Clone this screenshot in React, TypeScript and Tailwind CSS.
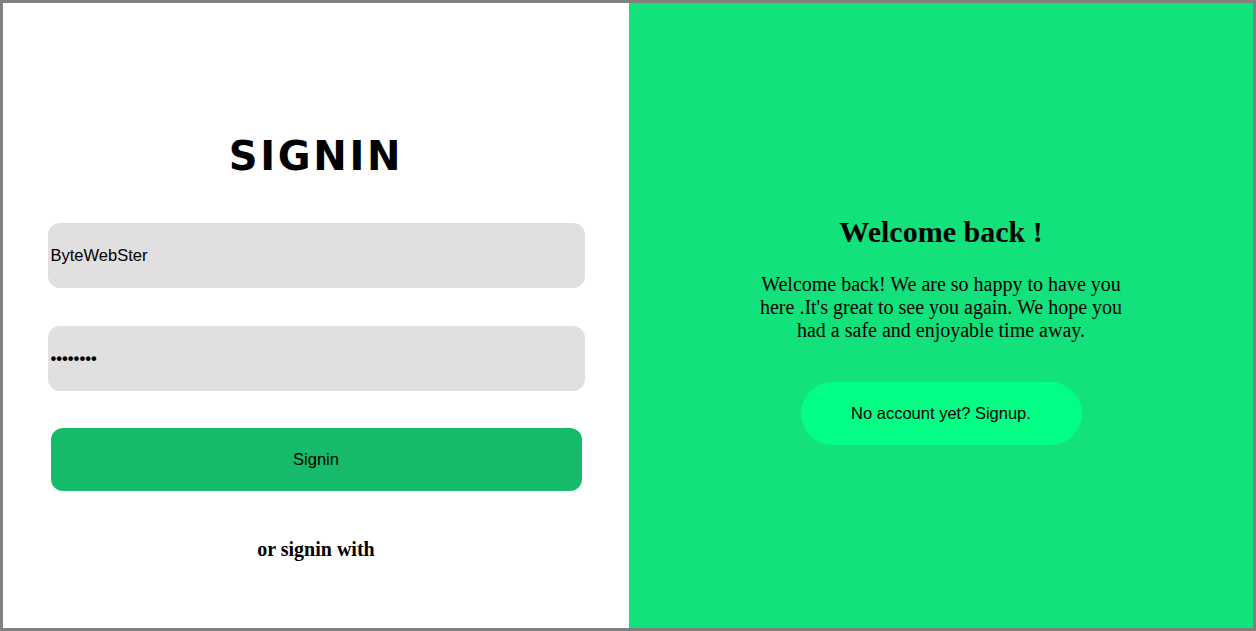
import React from "react";

function SigninForm() {
  return (
    <div className="w-[626px] h-full bg-white flex flex-col items-center pt-[129px]">
      <h1 className="h-[48px] leading-[48px] text-[40px] font-bold text-black tracking-[2.7px] font-['DejaVu_Sans',Verdana,sans-serif]">
        SIGNIN
      </h1>
      <input
        type="text"
        defaultValue="ByteWebSter"
        className="mt-[43px] w-[537px] h-[65px] rounded-[12px] bg-[#e1dfe0] pl-[3px] text-[16.5px] text-black outline-none font-['Liberation_Sans',Arial,sans-serif]"
      />
      <input
        type="password"
        defaultValue="12345678"
        className="mt-[38px] w-[537px] h-[65px] rounded-[12px] bg-[#e1dfe0] pl-[3px] text-[16.5px] font-bold text-black outline-none font-['Liberation_Sans',Arial,sans-serif]"
      />
      <button className="mt-[37px] w-[531px] h-[63px] rounded-[12px] bg-[#15bb6a] text-[16.5px] text-black font-['Liberation_Sans',Arial,sans-serif]">
        Signin
      </button>
      <p className="mt-[47px] text-[20px] leading-[23px] font-bold text-black font-['Liberation_Serif','Times_New_Roman',serif]">
        or signin with
      </p>
    </div>
  );
}

function WelcomePanel() {
  return (
    <div className="flex-1 h-full bg-[#13e17c] flex flex-col items-center pt-[212px] font-['Liberation_Serif','Times_New_Roman',serif] text-black">
      <h2 className="text-[30px] leading-[34px] font-bold">Welcome back !</h2>
      <p className="mt-[24px] w-[380px] text-center text-[20px] leading-[23px]">
        Welcome back! We are so happy to have you here .It's great to see you
        again. We hope you had a safe and enjoyable time away.
      </p>
      <button className="mt-[40px] w-[281px] h-[63px] rounded-full bg-[#03fe86] text-[16.5px] text-black font-['Liberation_Sans',Arial,sans-serif]">
        No account yet? Signup.
      </button>
    </div>
  );
}

export default function App() {
  return (
    <div className="w-full h-[631px] border-[3px] border-[#808080] flex">
      <SigninForm />
      <WelcomePanel />
    </div>
  );
}
